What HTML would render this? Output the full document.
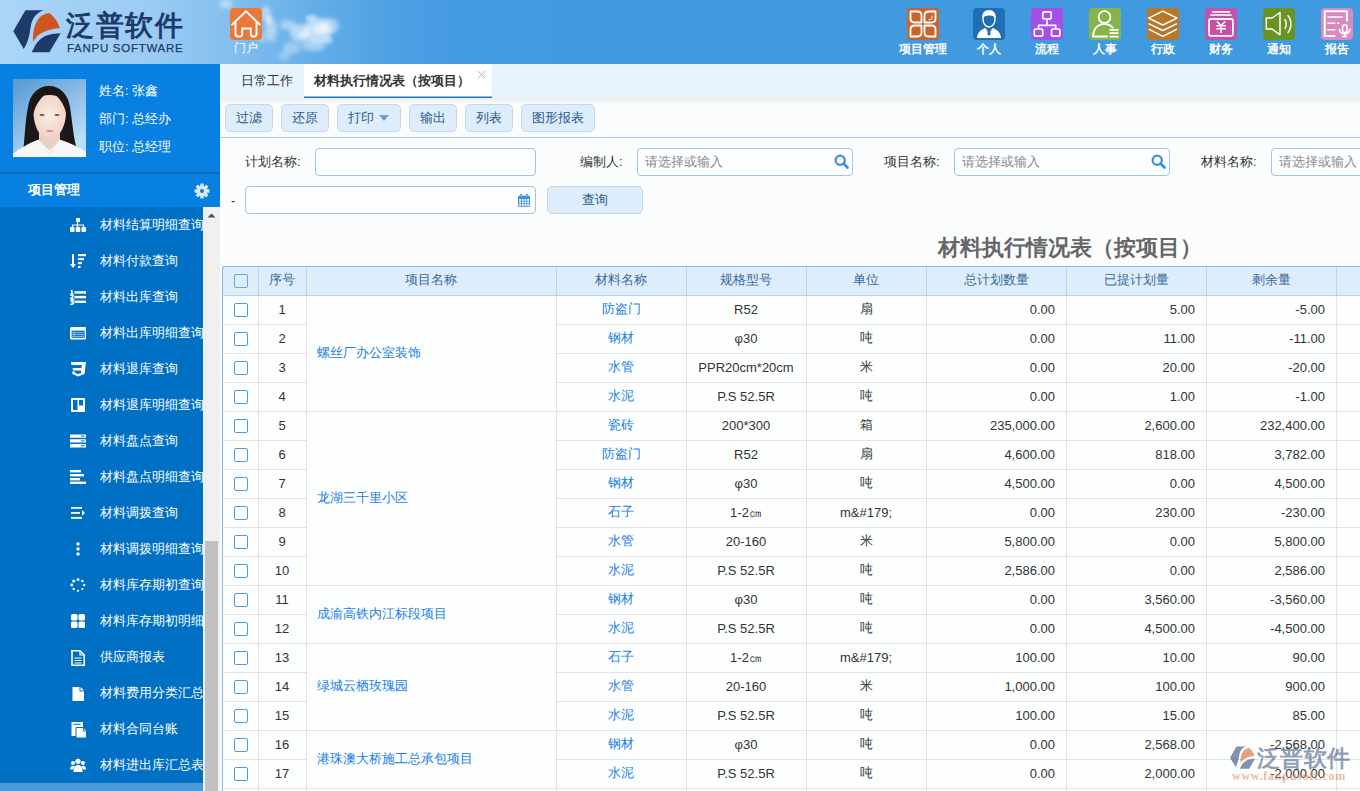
<!DOCTYPE html><html><head><meta charset="utf-8"><style>
*{margin:0;padding:0;box-sizing:border-box}
html,body{width:1360px;height:791px;overflow:hidden;font-family:"Liberation Sans",sans-serif;font-size:13px;color:#333;background:#fbfdfd}
.a{position:absolute}
.t{position:absolute;white-space:nowrap;line-height:1}
#hdr{position:absolute;left:0;top:0;width:1360px;height:64px;background:linear-gradient(to right,#aad5f7 0px,#9bccf4 150px,#80bdee 240px,#62ade8 320px,#4c9fe3 400px,#429ae0 480px,#409ae0 1360px);overflow:hidden}
.ico{position:absolute;top:8px;width:32px;height:32px;border-radius:4px}
.ico svg{position:absolute;left:0;top:0}
.lab{position:absolute;top:43px;font-size:12px;color:#fff;font-weight:bold;white-space:nowrap;line-height:12px;text-align:center;width:60px}
#side{position:absolute;left:0;top:64px;width:220px;height:727px;background:#0780e2;overflow:hidden}
.mi{position:absolute;left:0;width:203px;height:36px;color:#fff;overflow:hidden}
.mi .tx{position:absolute;left:100px;top:11px;font-size:13px;line-height:14px;white-space:nowrap}
.mi svg{position:absolute;left:70px;top:11px}
.btn{position:absolute;top:104px;height:28px;border:1px solid #c2d9ee;background:#deedfb;border-radius:5px;color:#2b5a8a;font-size:13px;line-height:25px;text-align:center}
.inp{position:absolute;height:28px;border:1px solid #9fc4e4;border-radius:4px;background:#fdfefe}
.ph{position:absolute;left:7px;top:6px;color:#8a8a8a;font-size:13px;line-height:14px;white-space:nowrap}
.lbl{position:absolute;font-size:13px;line-height:14px;color:#333;white-space:nowrap;margin-top:1px}
.vl{position:absolute;width:1px;background:#e2e2e2}
.hl{position:absolute;height:1px;background:#e2e2e2}
.cell{position:absolute;font-size:13px;line-height:14px;white-space:nowrap}
.cb{position:absolute;width:14px;height:14px;border:1.5px solid #4a9be0;border-radius:2px;background:#fff}
</style></head><body>
<div id="hdr">
<svg class="a" style="left:200px;top:0" width="180" height="64" viewBox="200 0 180 64">
<defs><filter id="cb" x="-50%" y="-50%" width="200%" height="200%"><feGaussianBlur stdDeviation="2.2"/></filter>
<filter id="cb2" x="-50%" y="-50%" width="200%" height="200%"><feGaussianBlur stdDeviation="1.2"/></filter></defs>
<g filter="url(#cb)" fill="#fff">
<ellipse cx="226" cy="4" rx="7" ry="4" opacity=".45"/>
<ellipse cx="266" cy="14" rx="5" ry="8" opacity=".45"/>
<ellipse cx="271" cy="30" rx="6" ry="12" opacity=".42"/>
<ellipse cx="262" cy="38" rx="4" ry="5" opacity=".3"/>
<ellipse cx="288" cy="25" rx="8" ry="5" opacity=".4"/>
<ellipse cx="300" cy="33" rx="10" ry="9" opacity=".5"/>
<ellipse cx="318" cy="30" rx="14" ry="12" opacity=".6"/>
<ellipse cx="330" cy="26" rx="9" ry="8" opacity=".45"/>
<ellipse cx="314" cy="45" rx="12" ry="6" opacity=".45"/>
<ellipse cx="292" cy="48" rx="9" ry="6" opacity=".35"/>
<ellipse cx="284" cy="56" rx="6" ry="4" opacity=".3"/>
</g>
<g filter="url(#cb2)" fill="#fff">
<ellipse cx="320" cy="29" rx="7" ry="6" opacity=".45"/>
<ellipse cx="303" cy="35" rx="5" ry="4" opacity=".4"/>
<ellipse cx="311" cy="18" rx="6" ry="3.5" opacity=".4"/>
<ellipse cx="328" cy="40" rx="5" ry="4" opacity=".4"/>
<ellipse cx="269" cy="20" rx="3" ry="5" opacity=".35"/>
</g>
</svg>
<svg class="a" style="left:0;top:0" width="70" height="64" viewBox="0 0 70 64"><path d="M13.3 31.3 L25.4 10.3 L43.5 10.3 C37.5 12.5 33 17 31.2 24 C30 30 29.5 40 23.8 49 Z" fill="#1e3a6a"/><path d="M33 41.8 C32.8 32 34 24 39.5 17.5 C43 14.5 46 13.5 49.4 13 C54 16.5 58 22 59.9 28 C52 28.5 45 30.5 40 34 C37 36 35 38.5 33 41.8 Z" fill="#cf5620"/><path d="M31.7 52.3 L49.4 52.3 L60.6 33.3 C53 33.5 45 35 40 39.5 C36 43 34 48 31.7 52.3 Z" fill="#1e3a6a"/></svg>
<div class="t" style="left:66px;top:10px;font-size:28px;line-height:32px;color:#1e3a6a;letter-spacing:1.5px;font-weight:bold">泛普软件</div>
<div class="t" style="left:67px;top:43px;font-size:11.5px;line-height:11px;color:#1e3a6a;letter-spacing:.72px;-webkit-text-stroke:.25px #1e3a6a">FANPU SOFTWARE</div>
<div class="ico" style="left:230px;background:#e8793a"><svg width="32" height="32" viewBox="0 0 32 32">
<path d="M2.2 16.5 L16 3.3 L29.8 16.5" fill="none" stroke="#fff" stroke-width="1.9" stroke-linejoin="miter" stroke-linecap="round"/>
<path d="M5.5 13 V26 Q5.5 28.5 8 28.5 H9.8 Q12.2 28.5 12.2 26 V20.5 H20.8 V26 Q20.8 28.5 23.2 28.5 H24 Q26.5 28.5 26.5 26 V13" fill="none" stroke="#fff" stroke-width="1.9"/>
</svg></div>
<div class="lab" style="left:216px;top:42px;font-weight:normal">门户</div>
<div class="ico" style="left:907px;background:#c8652e"><svg width="32" height="32" viewBox="0 0 32 32"><g fill="none" stroke="#fff" stroke-width="1.8" stroke-linejoin="round"><path d="M3.5 3.5 H10.5 Q14.5 3.5 14.5 7.5 V14.5 H7.5 Q3.5 14.5 3.5 10.5 Z"/><path d="M28.5 3.5 H21.5 Q17.5 3.5 17.5 7.5 V14.5 H24.5 Q28.5 14.5 28.5 10.5 Z"/><path d="M3.5 28.5 H10.5 Q14.5 28.5 14.5 24.5 V17.5 H7.5 Q3.5 17.5 3.5 21.5 Z"/><path d="M28.5 28.5 H21.5 Q17.5 28.5 17.5 24.5 V17.5 H24.5 Q28.5 17.5 28.5 21.5 Z"/></g><path d="M25 7.5 V10 Q25 11.5 23.5 11.5 H21.5" fill="none" stroke="#fff" stroke-width="0.9"/></svg></div>
<div class="lab" style="left:893px">项目管理</div>
<div class="ico" style="left:973px;background:#1f6db3"><svg width="32" height="32" viewBox="0 0 32 32"><path d="M10 11 C10 5.5 12.5 3.5 16 3.5 C19.5 3.5 22 5.5 22 11 C22 15.5 19.5 19 16 19 C12.5 19 10 15.5 10 11 Z" fill="#1f6db3" stroke="#fff" stroke-width="1.4"/><path d="M9.2 10 C9 5 11.5 2 16 2 C20.5 2 23 5 22.8 10 C21 8 18 7.5 16 7.5 C13 7.5 11 8.5 9.2 10 Z" fill="#fff"/><path d="M4 30 C4.5 24.5 7 22 12.5 20 L16 25.5 L19.5 20 C25 22 27.5 24.5 28 30 Z" fill="#fff"/><path d="M15 21 H17 L17.6 26 L16 28 L14.4 26 Z" fill="#1f6db3"/></svg></div>
<div class="lab" style="left:959px">个人</div>
<div class="ico" style="left:1031px;background:#a64ee6"><svg width="32" height="32" viewBox="0 0 32 32"><g fill="none" stroke="#fff" stroke-width="1.7" stroke-linejoin="round"><rect x="11.8" y="3.8" width="8.4" height="7.2" rx="1.3"/><rect x="3.3" y="21" width="8.4" height="7.2" rx="1.3"/><rect x="20.5" y="21" width="8.4" height="7.2" rx="1.3"/><path d="M16 11 V17.3 M7.5 21 V17.3 H24.7 V21"/></g></svg></div>
<div class="lab" style="left:1017px">流程</div>
<div class="ico" style="left:1089px;background:#86b34a"><svg width="32" height="32" viewBox="0 0 32 32"><g fill="none" stroke="#fff" stroke-width="1.8"><circle cx="15.5" cy="9.1" r="5.9"/><path d="M24.2 20.3 C22 17.5 19 16 15.5 16 C8.5 16 4.1 21.5 4.1 28.5 H18.8"/></g><path d="M20.5 21.8 H29.5 M20.5 25.2 H29.5 M20.5 28.6 H29.5" stroke="#fff" stroke-width="1.8"/></svg></div>
<div class="lab" style="left:1075px">人事</div>
<div class="ico" style="left:1147px;background:#b8782a"><svg width="32" height="32" viewBox="0 0 32 32"><g fill="none" stroke="#fff" stroke-width="1.5" stroke-linejoin="round"><path d="M15.8 3.2 L30 10.1 L15.8 17 L1.6 10.1 Z"/><path d="M1.6 15.6 L15.8 22.5 L30 15.6"/><path d="M1.6 21.2 L15.8 28.3 L30 21.2"/></g></svg></div>
<div class="lab" style="left:1133px">行政</div>
<div class="ico" style="left:1205px;background:#c64fa8"><svg width="32" height="32" viewBox="0 0 32 32"><path d="M7 3.9 H25 M5.3 7 H26.7" stroke="#fff" stroke-width="1.7"/><rect x="4.1" y="11" width="23.8" height="16.8" rx="1.5" fill="none" stroke="#fff" stroke-width="1.8"/><path d="M12 13.5 L16 17.7 L20.2 13.5 M11.3 17.7 H20.9 M11.3 20.8 H20.9 M16 17.7 V25" fill="none" stroke="#fff" stroke-width="1.6"/></svg></div>
<div class="lab" style="left:1191px">财务</div>
<div class="ico" style="left:1263px;background:#6a9322"><svg width="32" height="32" viewBox="0 0 32 32"><path d="M3.3 10 H9 L17 4.5 V26.8 L9 21 H3.3 Z" fill="none" stroke="#fff" stroke-width="1.5" stroke-linejoin="round"/><path d="M21.6 11 C23.8 13.5 23.8 18.5 21.6 21" fill="none" stroke="#fff" stroke-width="1.5"/><path d="M24.6 7.2 C29 12 29 20 24.6 25" fill="none" stroke="#fff" stroke-width="1.5"/></svg></div>
<div class="lab" style="left:1249px">通知</div>
<div class="ico" style="left:1321px;background:#d98bbf"><svg width="32" height="32" viewBox="0 0 32 32"><path d="M14.3 28.1 H3.7 V3.3 H25.9 V13.5" fill="none" stroke="#fff" stroke-width="2"/><path d="M6.4 9 H21.9 M6.4 15.3 H14.3 M16 15.3 H18.4 M6.4 21.8 H14.3" stroke="#fff" stroke-width="1.6"/><rect x="21.6" y="16.8" width="4.4" height="7.8" rx="2.2" fill="none" stroke="#fff" stroke-width="1.5"/><path d="M18.4 20.8 C18.4 24.3 20.5 25.8 23.8 25.8 C27 25.8 29 24.3 29 20.8 M23.8 25.8 V28.3 M21.3 28.5 H26.3" fill="none" stroke="#fff" stroke-width="1.5"/></svg></div>
<div class="lab" style="left:1307px">报告</div>
</div>
<div id="side">
<svg class="a" style="left:13px;top:15px" width="73" height="78" viewBox="0 0 73 78">
<defs><linearGradient id="pg" x1="0" y1="0" x2="0.6" y2="1"><stop offset="0" stop-color="#5697d2"/><stop offset="1" stop-color="#bde0f8"/></linearGradient>
<radialGradient id="sk" cx="0.5" cy="0.45" r="0.6"><stop offset="0" stop-color="#fbece4"/><stop offset="1" stop-color="#edcfc0"/></radialGradient></defs>
<rect width="73" height="78" fill="url(#pg)"/>
<path d="M10.5 69 C12 55 12.5 40 15 28 C17 15 25 7 36 7 C47 7 55 15 57 28 C59 40 60 55 63 67 Z" fill="#1b1718"/>
<path d="M26 50 H47 V74 H26 Z" fill="#ead0c2"/>
<path d="M20.5 33 C20.5 22 26 16 36.7 16 C47 16 53 22 53 33 C53 47 46 60.5 36.7 60.5 C27 60.5 20.5 47 20.5 33 Z" fill="url(#sk)"/>
<path d="M19.5 38 C18 22 24 9 36.5 9 C49 9 55 22 54 38 C52 26 46 17 37 12 C28 17 22 26 19.5 38 Z" fill="#1b1718"/>
<path d="M0 78 V75 C6 70 16 64 25.5 60.5 C29 65 33 69 36.7 71 C40.5 69 44 65 46.7 60.5 C56 63.5 66 68 73 73 V78 Z" fill="#f7f7f9"/>
<path d="M32 71 L36.7 75 L41 71" fill="none" stroke="#dcdde2" stroke-width=".8"/>
<ellipse cx="29" cy="36" rx="2.6" ry="1.1" fill="#6a5550"/>
<ellipse cx="44" cy="36" rx="2.6" ry="1.1" fill="#6a5550"/>
<ellipse cx="36.7" cy="52" rx="3.6" ry="1.1" fill="#e28a92"/>
</svg>
<div class="t" style="left:99px;top:20px;font-size:13px;line-height:14px;color:#fff">姓名: 张鑫</div>
<div class="t" style="left:99px;top:48px;font-size:13px;line-height:14px;color:#fff">部门: 总经办</div>
<div class="t" style="left:99px;top:76px;font-size:13px;line-height:14px;color:#fff">职位: 总经理</div>
<div class="a" style="left:0;top:108px;width:220px;height:2px;background:#0a6bbd"></div>
<div class="t" style="left:28px;top:119px;font-size:13px;line-height:14px;color:#fff;font-weight:bold">项目管理</div>
<svg class="a" style="left:194px;top:118.5px" width="16" height="16" viewBox="0 0 16 16"><g fill="#d6e7f7">
<circle cx="8" cy="8" r="5.6"/>
<rect x="6.3" y="0.5" width="3.4" height="15" rx="0.6"/>
<rect x="6.3" y="0.5" width="3.4" height="15" rx="0.6" transform="rotate(45 8 8)"/>
<rect x="6.3" y="0.5" width="3.4" height="15" rx="0.6" transform="rotate(90 8 8)"/>
<rect x="6.3" y="0.5" width="3.4" height="15" rx="0.6" transform="rotate(135 8 8)"/>
</g><circle cx="8" cy="8" r="2" fill="#0780e2"/></svg>
<div class="a" style="left:0;top:143px;width:220px;height:584px;background:#0070c4">
<div class="mi" style="top:0px"><svg width="16" height="16" viewBox="0 0 16 16" fill="#fff"><rect x="6" y="0" width="4" height="4" rx=".5"/><path d="M7.5 4 V7 H2.5 V9 M7.5 7 H13.5 V9 M7.5 7 V9" stroke="#fff" stroke-width="1.2" fill="none"/><rect x="0" y="9" width="4.5" height="5" rx=".7"/><rect x="5.75" y="9" width="4.5" height="5" rx=".7"/><rect x="11.5" y="9" width="4.5" height="5" rx=".7"/></svg><div class="tx">材料结算明细查询</div></div>
<div class="mi" style="top:36px"><svg width="16" height="16" viewBox="0 0 16 16" fill="#fff"><path d="M3 0 V11" stroke="#fff" stroke-width="2"/><path d="M0 10 L3 14 L6 10 Z"/><rect x="8" y="0" width="8" height="2.2"/><rect x="8" y="4" width="6" height="2.2"/><rect x="8" y="8" width="4" height="2.2"/><rect x="8" y="12" width="2.5" height="2"/></svg><div class="tx">材料付款查询</div></div>
<div class="mi" style="top:72px"><svg width="16" height="16" viewBox="0 0 16 16" fill="#fff"><rect x="4.5" y="1.2" width="12" height="2.4"/><rect x="4.5" y="5.9" width="12" height="2.4"/><rect x="4.5" y="10.6" width="12" height="2.4"/><g fill="none" stroke="#fff" stroke-width="1.5"><path d="M0.6 0.6 L1.9 -0.2 V3.9 M0.4 3.9 H3.4"/><path d="M0.4 5.6 Q1.8 4.4 3 5.3 Q3.6 6.5 0.6 8.8 H3.6"/><path d="M0.4 10 H3.2 L1.6 11.6 Q3.6 11.8 3.4 13.2 Q2.6 14.8 0.3 14.1"/></g></svg><div class="tx">材料出库查询</div></div>
<div class="mi" style="top:108px"><svg width="16" height="16" viewBox="0 0 16 16" fill="#fff"><rect x="0" y="1" width="16.3" height="12.5" rx="1.5"/><rect x="1.6" y="4.6" width="13.1" height="7.3" fill="#0070c4"/><path d="M2.2 6.6 H14.1 M2.2 8.6 H14.1 M2.2 10.6 H14.1" stroke="#8fbde6" stroke-width="1"/><path d="M4 5 V11.5" stroke="#8fbde6" stroke-width="0.8"/></svg><div class="tx">材料出库明细查询</div></div>
<div class="mi" style="top:144px"><svg width="16" height="16" viewBox="0 0 16 16" fill="#fff"><path d="M1 0 H16 L14.5 12 L8 14.5 L2.5 12 L2.2 9.5 H5 L5.2 11 L8 12 L11 11 L11.3 8.5 H3 L2.7 6 H11.5 L11.8 3 H1.3 Z"/></svg><div class="tx">材料退库查询</div></div>
<div class="mi" style="top:180px"><svg width="16" height="16" viewBox="0 0 16 16" fill="#fff"><rect x="1" y="0" width="14" height="14" rx="1"/><rect x="3" y="2" width="4.5" height="10" fill="#0070c4"/><rect x="9" y="2" width="4" height="5.5" fill="#0070c4"/></svg><div class="tx">材料退库明细查询</div></div>
<div class="mi" style="top:216px"><svg width="16" height="16" viewBox="0 0 16 16" fill="#fff"><rect x="0" y="0.5" width="16" height="3.3" rx=".5"/><rect x="0" y="5.3" width="16" height="3.3" rx=".5"/><rect x="0" y="10.1" width="16" height="3.3" rx=".5"/><rect x="11" y="1.6" width="3.5" height="1" fill="#0070c4"/><rect x="11" y="6.4" width="3.5" height="1" fill="#0070c4"/><rect x="11" y="11.2" width="3.5" height="1" fill="#0070c4"/></svg><div class="tx">材料盘点查询</div></div>
<div class="mi" style="top:252px"><svg width="16" height="16" viewBox="0 0 16 16" fill="#fff"><rect x="0" y="0" width="11" height="2.4"/><rect x="0" y="4" width="14" height="2.4"/><rect x="0" y="8" width="10" height="2.4"/><rect x="0" y="11.6" width="16" height="2.4"/></svg><div class="tx">材料盘点明细查询</div></div>
<div class="mi" style="top:288px"><svg width="16" height="16" viewBox="0 0 16 16" fill="#fff"><rect x="1" y="1" width="11" height="1.8"/><rect x="1" y="6" width="9" height="1.8"/><rect x="1" y="11" width="11" height="1.8"/><path d="M12 4 L15 6.9 L12 9.8 Z"/></svg><div class="tx">材料调拨查询</div></div>
<div class="mi" style="top:324px"><svg width="16" height="16" viewBox="0 0 16 16" fill="#fff"><circle cx="8" cy="2" r="1.7"/><circle cx="8" cy="7" r="1.7"/><circle cx="8" cy="12" r="1.7"/></svg><div class="tx">材料调拨明细查询</div></div>
<div class="mi" style="top:360px"><svg width="16" height="16" viewBox="0 0 16 16" fill="#fff"><circle cx="8" cy="1.5" r="1.5"/><circle cx="12.3" cy="3" r="1.3"/><circle cx="14.2" cy="7" r="1.2"/><circle cx="12.3" cy="11" r="1.1"/><circle cx="8" cy="12.8" r="1.1"/><circle cx="3.7" cy="11" r="1.2"/><circle cx="1.8" cy="7" r="1.4"/><circle cx="3.7" cy="3" r="1.5"/></svg><div class="tx">材料库存期初查询</div></div>
<div class="mi" style="top:396px"><svg width="16" height="16" viewBox="0 0 16 16" fill="#fff"><rect x="1" y="0" width="6.5" height="6.5" rx="1.5"/><rect x="8.5" y="0" width="6.5" height="6.5" rx="1.5"/><rect x="1" y="7.5" width="6.5" height="6.5" rx="1.5"/><rect x="8.5" y="7.5" width="6.5" height="6.5" rx="1.5"/></svg><div class="tx">材料库存期初明细查询</div></div>
<div class="mi" style="top:432px"><svg width="16" height="16" viewBox="0 0 16 16" fill="#fff"><path d="M2 0.8 H10 L14.2 5 V15.2 H2 Z" fill="none" stroke="#fff" stroke-width="1.6"/><path d="M10 0.8 V5 H14.2" fill="none" stroke="#fff" stroke-width="1.2"/><path d="M4.5 8 H11.5 M4.5 10.5 H11.5 M4.5 13 H11.5" stroke="#fff" stroke-width="1.2"/></svg><div class="tx">供应商报表</div></div>
<div class="mi" style="top:468px"><svg width="16" height="16" viewBox="0 0 16 16" fill="#fff"><path d="M2.5 1 H9.5 V5.5 H14 V15 H2.5 Z"/><path d="M10.5 1 L14 4.5 H10.5 Z"/></svg><div class="tx">材料费用分类汇总表</div></div>
<div class="mi" style="top:504px"><svg width="16" height="16" viewBox="0 0 16 16" fill="#fff"><path d="M1.5 0 H13 V14 H1.5 Z"/><rect x="3.5" y="1.8" width="7" height="1" fill="#0070c4"/><path d="M6 5.5 H13.5 L17 9 V16 H6 Z" fill="#fff" stroke="#0070c4" stroke-width="1"/><path d="M13.5 5.5 V9 H17" fill="none" stroke="#0070c4" stroke-width="0.9"/></svg><div class="tx">材料合同台账</div></div>
<div class="mi" style="top:540px"><svg width="16" height="16" viewBox="0 0 16 16" fill="#fff"><circle cx="8" cy="3.3" r="2.6"/><path d="M3.5 14 C3.5 9 5 7 8 7 C11 7 12.5 9 12.5 14 Z"/><circle cx="3" cy="5" r="2"/><circle cx="13" cy="5" r="2"/><path d="M0 11.5 C0 9 1 7.8 3 7.8 C3.8 7.8 4.3 8 4.6 8.3 C3.8 9.2 3.3 10.3 3.3 11.5 Z"/><path d="M16 11.5 C16 9 15 7.8 13 7.8 C12.2 7.8 11.7 8 11.4 8.3 C12.2 9.2 12.7 10.3 12.7 11.5 Z"/></svg><div class="tx">材料进出库汇总表</div></div>
<div class="a" style="left:0;top:576px;width:203px;height:8px;background:#4b9ad8"></div>
<div class="a" style="left:203px;top:0;width:17px;height:584px;background:#f0f0f0"></div>
<svg class="a" style="left:206px;top:5px" width="11" height="7" viewBox="0 0 11 7"><path d="M1.5 5.5 L5.5 1.5 L9.5 5.5 Z" fill="#505050"/></svg>
<div class="a" style="left:205px;top:334px;width:13px;height:260px;background:#c1c1c1"></div>
</div>
</div>
<div class="a" style="left:220px;top:64px;width:1140px;height:34px;background:#e7f4fe"></div>
<div class="a" style="left:220px;top:98px;width:1140px;height:6px;background:linear-gradient(#ececec,rgba(251,253,253,0))"></div>
<div class="t" style="left:241px;top:74px;font-size:13px;line-height:14px;color:#333">日常工作</div>
<div class="a" style="left:304px;top:64px;width:188px;height:34px;background:#fff;border-bottom:1px solid #1f72c4;box-shadow:inset 0 -1px 0 #8dbbe6"></div>
<div class="t" style="left:314px;top:74px;font-size:13px;line-height:14px;color:#333;font-weight:bold">材料执行情况表（按项目）</div>
<svg class="a" style="left:477px;top:70px" width="9" height="9" viewBox="0 0 9 9"><path d="M1 1 L8 8 M8 1 L1 8" stroke="#b0b0b0" stroke-width="1"/></svg>
<div class="btn" style="left:225px;width:48px">过滤</div>
<div class="btn" style="left:281px;width:48px">还原</div>
<div class="btn" style="left:337px;width:64px;text-align:left;padding-left:10px">打印<svg style="position:absolute;left:41px;top:10px" width="10" height="6" viewBox="0 0 10 6"><path d="M0 0 H10 L5 6 Z" fill="#6a9fd4"/></svg></div>
<div class="btn" style="left:409px;width:48px">输出</div>
<div class="btn" style="left:465px;width:48px">列表</div>
<div class="btn" style="left:521px;width:74px">图形报表</div>
<div class="a" style="left:220px;top:137px;width:1140px;height:1px;background:#a6cbe8"></div>
<div class="lbl" style="left:245px;top:154px">计划名称:</div>
<div class="inp" style="left:315px;top:148px;width:221px"></div>
<div class="lbl" style="left:580px;top:154px">编制人:</div>
<div class="inp" style="left:637px;top:148px;width:216px"><div class="ph">请选择或输入</div></div>
<div class="lbl" style="left:884px;top:154px">项目名称:</div>
<div class="inp" style="left:954px;top:148px;width:216px"><div class="ph">请选择或输入</div></div>
<div class="lbl" style="left:1201px;top:154px">材料名称:</div>
<div class="inp" style="left:1271px;top:148px;width:120px"><div class="ph">请选择或输入</div></div>
<svg class="a" style="left:834px;top:154px" width="15" height="15" viewBox="0 0 15 15"><circle cx="6.2" cy="6.2" r="4.6" fill="none" stroke="#3a8fdc" stroke-width="2.2"/><path d="M9.5 9.5 L13.5 13.5" stroke="#3a8fdc" stroke-width="2.6" stroke-linecap="round"/></svg>
<svg class="a" style="left:1151px;top:154px" width="15" height="15" viewBox="0 0 15 15"><circle cx="6.2" cy="6.2" r="4.6" fill="none" stroke="#3a8fdc" stroke-width="2.2"/><path d="M9.5 9.5 L13.5 13.5" stroke="#3a8fdc" stroke-width="2.6" stroke-linecap="round"/></svg>
<div class="t" style="left:231px;top:194px;font-size:13px;color:#333">-</div>
<div class="inp" style="left:245px;top:186px;width:291px"></div>
<svg class="a" style="left:518px;top:194px" width="12" height="13" viewBox="0 0 12 13"><rect x="0" y="1.8" width="12" height="11" rx="1" fill="#3f90dc"/><rect x="1.1" y="5.1" width="1.9" height="1.7" fill="#fff"/><rect x="1.1" y="7.6" width="1.9" height="1.7" fill="#fff"/><rect x="1.1" y="10.1" width="1.9" height="1.7" fill="#fff"/><rect x="3.9" y="5.1" width="1.9" height="1.7" fill="#fff"/><rect x="3.9" y="7.6" width="1.9" height="1.7" fill="#fff"/><rect x="3.9" y="10.1" width="1.9" height="1.7" fill="#fff"/><rect x="6.6" y="5.1" width="1.9" height="1.7" fill="#fff"/><rect x="6.6" y="7.6" width="1.9" height="1.7" fill="#fff"/><rect x="6.6" y="10.1" width="1.9" height="1.7" fill="#fff"/><rect x="9.2" y="5.1" width="1.9" height="1.7" fill="#fff"/><rect x="9.2" y="7.6" width="1.9" height="1.7" fill="#fff"/><rect x="9.2" y="10.1" width="1.9" height="1.7" fill="#fff"/><rect x="2" y="0" width="2.2" height="3.2" rx=".8" fill="#3f90dc"/><rect x="7.6" y="0" width="2.2" height="3.2" rx=".8" fill="#3f90dc"/><rect x="2.7" y="1" width="0.8" height="1.6" fill="#cfe3f6"/><rect x="8.3" y="1" width="0.8" height="1.6" fill="#cfe3f6"/></svg>
<div class="btn" style="left:547px;top:186px;width:96px">查询</div>
<div class="t" style="left:938px;top:235px;font-size:22px;line-height:26px;color:#666;font-weight:bold">材料执行情况表（按项目）</div>
<div class="a" style="left:222px;top:266px;width:1138px;height:30px;background:#deedfb;border-top:1px solid #80b6e2;border-bottom:1px solid #b3d2ee;border-left:1px solid #80b6e2;border-top-left-radius:3px"></div>
<div class="a" style="left:222px;top:296px;width:1138px;height:500px;background:#fdfefe;border-left:1px solid #80b6e2"></div>
<div class="a" style="left:258px;top:267px;width:1px;height:28px;background:#b8d5ee"></div>
<div class="a" style="left:306px;top:267px;width:1px;height:28px;background:#b8d5ee"></div>
<div class="a" style="left:556px;top:267px;width:1px;height:28px;background:#b8d5ee"></div>
<div class="a" style="left:686px;top:267px;width:1px;height:28px;background:#b8d5ee"></div>
<div class="a" style="left:806px;top:267px;width:1px;height:28px;background:#b8d5ee"></div>
<div class="a" style="left:926px;top:267px;width:1px;height:28px;background:#b8d5ee"></div>
<div class="a" style="left:1066px;top:267px;width:1px;height:28px;background:#b8d5ee"></div>
<div class="a" style="left:1206px;top:267px;width:1px;height:28px;background:#b8d5ee"></div>
<div class="a" style="left:1336px;top:267px;width:1px;height:28px;background:#b8d5ee"></div>
<div class="cell" style="left:258px;width:48px;top:273px;text-align:center;color:#3b6a98">序号</div>
<div class="cell" style="left:306px;width:250px;top:273px;text-align:center;color:#3b6a98">项目名称</div>
<div class="cell" style="left:556px;width:130px;top:273px;text-align:center;color:#3b6a98">材料名称</div>
<div class="cell" style="left:686px;width:120px;top:273px;text-align:center;color:#3b6a98">规格型号</div>
<div class="cell" style="left:806px;width:120px;top:273px;text-align:center;color:#3b6a98">单位</div>
<div class="cell" style="left:926px;width:140px;top:273px;text-align:center;color:#3b6a98">总计划数量</div>
<div class="cell" style="left:1066px;width:140px;top:273px;text-align:center;color:#3b6a98">已提计划量</div>
<div class="cell" style="left:1206px;width:130px;top:273px;text-align:center;color:#3b6a98">剩余量</div>
<div class="cb" style="left:234px;top:274px;border:1px solid #6fa6d8;background:transparent"></div>
<div class="vl" style="left:258px;top:296px;height:500px"></div>
<div class="vl" style="left:306px;top:296px;height:500px"></div>
<div class="vl" style="left:556px;top:296px;height:500px"></div>
<div class="vl" style="left:686px;top:296px;height:500px"></div>
<div class="vl" style="left:806px;top:296px;height:500px"></div>
<div class="vl" style="left:926px;top:296px;height:500px"></div>
<div class="vl" style="left:1066px;top:296px;height:500px"></div>
<div class="vl" style="left:1206px;top:296px;height:500px"></div>
<div class="vl" style="left:1336px;top:296px;height:500px"></div>
<div class="hl" style="left:223px;top:324px;width:83px"></div>
<div class="hl" style="left:556px;top:324px;width:804px"></div>
<div class="hl" style="left:223px;top:353px;width:83px"></div>
<div class="hl" style="left:556px;top:353px;width:804px"></div>
<div class="hl" style="left:223px;top:382px;width:83px"></div>
<div class="hl" style="left:556px;top:382px;width:804px"></div>
<div class="hl" style="left:223px;top:411px;width:1137px"></div>
<div class="cell" style="left:317px;top:346px;color:#1a80e6">螺丝厂办公室装饰</div>
<div class="cb" style="left:234px;top:303px"></div>
<div class="cell" style="left:258px;width:48px;top:303px;text-align:center">1</div>
<div class="cell" style="left:556px;width:130px;top:302px;text-align:center;color:#1a80e6">防盗门</div>
<div class="cell" style="left:686px;width:120px;top:303px;text-align:center">R52</div>
<div class="cell" style="left:806px;width:120px;top:302px;text-align:center">扇</div>
<div class="cell" style="left:926px;width:129px;top:303px;text-align:right">0.00</div>
<div class="cell" style="left:1066px;width:129px;top:303px;text-align:right">5.00</div>
<div class="cell" style="left:1206px;width:119px;top:303px;text-align:right">-5.00</div>
<div class="cb" style="left:234px;top:332px"></div>
<div class="cell" style="left:258px;width:48px;top:332px;text-align:center">2</div>
<div class="cell" style="left:556px;width:130px;top:331px;text-align:center;color:#1a80e6">钢材</div>
<div class="cell" style="left:686px;width:120px;top:332px;text-align:center">φ30</div>
<div class="cell" style="left:806px;width:120px;top:331px;text-align:center">吨</div>
<div class="cell" style="left:926px;width:129px;top:332px;text-align:right">0.00</div>
<div class="cell" style="left:1066px;width:129px;top:332px;text-align:right">11.00</div>
<div class="cell" style="left:1206px;width:119px;top:332px;text-align:right">-11.00</div>
<div class="cb" style="left:234px;top:361px"></div>
<div class="cell" style="left:258px;width:48px;top:361px;text-align:center">3</div>
<div class="cell" style="left:556px;width:130px;top:360px;text-align:center;color:#1a80e6">水管</div>
<div class="cell" style="left:686px;width:120px;top:361px;text-align:center">PPR20cm*20cm</div>
<div class="cell" style="left:806px;width:120px;top:360px;text-align:center">米</div>
<div class="cell" style="left:926px;width:129px;top:361px;text-align:right">0.00</div>
<div class="cell" style="left:1066px;width:129px;top:361px;text-align:right">20.00</div>
<div class="cell" style="left:1206px;width:119px;top:361px;text-align:right">-20.00</div>
<div class="cb" style="left:234px;top:390px"></div>
<div class="cell" style="left:258px;width:48px;top:390px;text-align:center">4</div>
<div class="cell" style="left:556px;width:130px;top:389px;text-align:center;color:#1a80e6">水泥</div>
<div class="cell" style="left:686px;width:120px;top:390px;text-align:center">P.S 52.5R</div>
<div class="cell" style="left:806px;width:120px;top:389px;text-align:center">吨</div>
<div class="cell" style="left:926px;width:129px;top:390px;text-align:right">0.00</div>
<div class="cell" style="left:1066px;width:129px;top:390px;text-align:right">1.00</div>
<div class="cell" style="left:1206px;width:119px;top:390px;text-align:right">-1.00</div>
<div class="hl" style="left:223px;top:440px;width:83px"></div>
<div class="hl" style="left:556px;top:440px;width:804px"></div>
<div class="hl" style="left:223px;top:469px;width:83px"></div>
<div class="hl" style="left:556px;top:469px;width:804px"></div>
<div class="hl" style="left:223px;top:498px;width:83px"></div>
<div class="hl" style="left:556px;top:498px;width:804px"></div>
<div class="hl" style="left:223px;top:527px;width:83px"></div>
<div class="hl" style="left:556px;top:527px;width:804px"></div>
<div class="hl" style="left:223px;top:556px;width:83px"></div>
<div class="hl" style="left:556px;top:556px;width:804px"></div>
<div class="hl" style="left:223px;top:585px;width:1137px"></div>
<div class="cell" style="left:317px;top:491px;color:#1a80e6">龙湖三千里小区</div>
<div class="cb" style="left:234px;top:419px"></div>
<div class="cell" style="left:258px;width:48px;top:419px;text-align:center">5</div>
<div class="cell" style="left:556px;width:130px;top:418px;text-align:center;color:#1a80e6">瓷砖</div>
<div class="cell" style="left:686px;width:120px;top:419px;text-align:center">200*300</div>
<div class="cell" style="left:806px;width:120px;top:418px;text-align:center">箱</div>
<div class="cell" style="left:926px;width:129px;top:419px;text-align:right">235,000.00</div>
<div class="cell" style="left:1066px;width:129px;top:419px;text-align:right">2,600.00</div>
<div class="cell" style="left:1206px;width:119px;top:419px;text-align:right">232,400.00</div>
<div class="cb" style="left:234px;top:448px"></div>
<div class="cell" style="left:258px;width:48px;top:448px;text-align:center">6</div>
<div class="cell" style="left:556px;width:130px;top:447px;text-align:center;color:#1a80e6">防盗门</div>
<div class="cell" style="left:686px;width:120px;top:448px;text-align:center">R52</div>
<div class="cell" style="left:806px;width:120px;top:447px;text-align:center">扇</div>
<div class="cell" style="left:926px;width:129px;top:448px;text-align:right">4,600.00</div>
<div class="cell" style="left:1066px;width:129px;top:448px;text-align:right">818.00</div>
<div class="cell" style="left:1206px;width:119px;top:448px;text-align:right">3,782.00</div>
<div class="cb" style="left:234px;top:477px"></div>
<div class="cell" style="left:258px;width:48px;top:477px;text-align:center">7</div>
<div class="cell" style="left:556px;width:130px;top:476px;text-align:center;color:#1a80e6">钢材</div>
<div class="cell" style="left:686px;width:120px;top:477px;text-align:center">φ30</div>
<div class="cell" style="left:806px;width:120px;top:476px;text-align:center">吨</div>
<div class="cell" style="left:926px;width:129px;top:477px;text-align:right">4,500.00</div>
<div class="cell" style="left:1066px;width:129px;top:477px;text-align:right">0.00</div>
<div class="cell" style="left:1206px;width:119px;top:477px;text-align:right">4,500.00</div>
<div class="cb" style="left:234px;top:506px"></div>
<div class="cell" style="left:258px;width:48px;top:506px;text-align:center">8</div>
<div class="cell" style="left:556px;width:130px;top:505px;text-align:center;color:#1a80e6">石子</div>
<div class="cell" style="left:686px;width:120px;top:506px;text-align:center">1-2㎝</div>
<div class="cell" style="left:806px;width:120px;top:506px;text-align:center">m&amp;#179;</div>
<div class="cell" style="left:926px;width:129px;top:506px;text-align:right">0.00</div>
<div class="cell" style="left:1066px;width:129px;top:506px;text-align:right">230.00</div>
<div class="cell" style="left:1206px;width:119px;top:506px;text-align:right">-230.00</div>
<div class="cb" style="left:234px;top:535px"></div>
<div class="cell" style="left:258px;width:48px;top:535px;text-align:center">9</div>
<div class="cell" style="left:556px;width:130px;top:534px;text-align:center;color:#1a80e6">水管</div>
<div class="cell" style="left:686px;width:120px;top:535px;text-align:center">20-160</div>
<div class="cell" style="left:806px;width:120px;top:534px;text-align:center">米</div>
<div class="cell" style="left:926px;width:129px;top:535px;text-align:right">5,800.00</div>
<div class="cell" style="left:1066px;width:129px;top:535px;text-align:right">0.00</div>
<div class="cell" style="left:1206px;width:119px;top:535px;text-align:right">5,800.00</div>
<div class="cb" style="left:234px;top:564px"></div>
<div class="cell" style="left:258px;width:48px;top:564px;text-align:center">10</div>
<div class="cell" style="left:556px;width:130px;top:563px;text-align:center;color:#1a80e6">水泥</div>
<div class="cell" style="left:686px;width:120px;top:564px;text-align:center">P.S 52.5R</div>
<div class="cell" style="left:806px;width:120px;top:563px;text-align:center">吨</div>
<div class="cell" style="left:926px;width:129px;top:564px;text-align:right">2,586.00</div>
<div class="cell" style="left:1066px;width:129px;top:564px;text-align:right">0.00</div>
<div class="cell" style="left:1206px;width:119px;top:564px;text-align:right">2,586.00</div>
<div class="hl" style="left:223px;top:614px;width:83px"></div>
<div class="hl" style="left:556px;top:614px;width:804px"></div>
<div class="hl" style="left:223px;top:643px;width:1137px"></div>
<div class="cell" style="left:317px;top:607px;color:#1a80e6">成渝高铁内江标段项目</div>
<div class="cb" style="left:234px;top:593px"></div>
<div class="cell" style="left:258px;width:48px;top:593px;text-align:center">11</div>
<div class="cell" style="left:556px;width:130px;top:592px;text-align:center;color:#1a80e6">钢材</div>
<div class="cell" style="left:686px;width:120px;top:593px;text-align:center">φ30</div>
<div class="cell" style="left:806px;width:120px;top:592px;text-align:center">吨</div>
<div class="cell" style="left:926px;width:129px;top:593px;text-align:right">0.00</div>
<div class="cell" style="left:1066px;width:129px;top:593px;text-align:right">3,560.00</div>
<div class="cell" style="left:1206px;width:119px;top:593px;text-align:right">-3,560.00</div>
<div class="cb" style="left:234px;top:622px"></div>
<div class="cell" style="left:258px;width:48px;top:622px;text-align:center">12</div>
<div class="cell" style="left:556px;width:130px;top:621px;text-align:center;color:#1a80e6">水泥</div>
<div class="cell" style="left:686px;width:120px;top:622px;text-align:center">P.S 52.5R</div>
<div class="cell" style="left:806px;width:120px;top:621px;text-align:center">吨</div>
<div class="cell" style="left:926px;width:129px;top:622px;text-align:right">0.00</div>
<div class="cell" style="left:1066px;width:129px;top:622px;text-align:right">4,500.00</div>
<div class="cell" style="left:1206px;width:119px;top:622px;text-align:right">-4,500.00</div>
<div class="hl" style="left:223px;top:672px;width:83px"></div>
<div class="hl" style="left:556px;top:672px;width:804px"></div>
<div class="hl" style="left:223px;top:701px;width:83px"></div>
<div class="hl" style="left:556px;top:701px;width:804px"></div>
<div class="hl" style="left:223px;top:730px;width:1137px"></div>
<div class="cell" style="left:317px;top:679px;color:#1a80e6">绿城云栖玫瑰园</div>
<div class="cb" style="left:234px;top:651px"></div>
<div class="cell" style="left:258px;width:48px;top:651px;text-align:center">13</div>
<div class="cell" style="left:556px;width:130px;top:650px;text-align:center;color:#1a80e6">石子</div>
<div class="cell" style="left:686px;width:120px;top:651px;text-align:center">1-2㎝</div>
<div class="cell" style="left:806px;width:120px;top:651px;text-align:center">m&amp;#179;</div>
<div class="cell" style="left:926px;width:129px;top:651px;text-align:right">100.00</div>
<div class="cell" style="left:1066px;width:129px;top:651px;text-align:right">10.00</div>
<div class="cell" style="left:1206px;width:119px;top:651px;text-align:right">90.00</div>
<div class="cb" style="left:234px;top:680px"></div>
<div class="cell" style="left:258px;width:48px;top:680px;text-align:center">14</div>
<div class="cell" style="left:556px;width:130px;top:679px;text-align:center;color:#1a80e6">水管</div>
<div class="cell" style="left:686px;width:120px;top:680px;text-align:center">20-160</div>
<div class="cell" style="left:806px;width:120px;top:679px;text-align:center">米</div>
<div class="cell" style="left:926px;width:129px;top:680px;text-align:right">1,000.00</div>
<div class="cell" style="left:1066px;width:129px;top:680px;text-align:right">100.00</div>
<div class="cell" style="left:1206px;width:119px;top:680px;text-align:right">900.00</div>
<div class="cb" style="left:234px;top:709px"></div>
<div class="cell" style="left:258px;width:48px;top:709px;text-align:center">15</div>
<div class="cell" style="left:556px;width:130px;top:708px;text-align:center;color:#1a80e6">水泥</div>
<div class="cell" style="left:686px;width:120px;top:709px;text-align:center">P.S 52.5R</div>
<div class="cell" style="left:806px;width:120px;top:708px;text-align:center">吨</div>
<div class="cell" style="left:926px;width:129px;top:709px;text-align:right">100.00</div>
<div class="cell" style="left:1066px;width:129px;top:709px;text-align:right">15.00</div>
<div class="cell" style="left:1206px;width:119px;top:709px;text-align:right">85.00</div>
<div class="hl" style="left:223px;top:759px;width:83px"></div>
<div class="hl" style="left:556px;top:759px;width:804px"></div>
<div class="hl" style="left:223px;top:788px;width:1137px"></div>
<div class="cell" style="left:317px;top:752px;color:#1a80e6">港珠澳大桥施工总承包项目</div>
<div class="cb" style="left:234px;top:738px"></div>
<div class="cell" style="left:258px;width:48px;top:738px;text-align:center">16</div>
<div class="cell" style="left:556px;width:130px;top:737px;text-align:center;color:#1a80e6">钢材</div>
<div class="cell" style="left:686px;width:120px;top:738px;text-align:center">φ30</div>
<div class="cell" style="left:806px;width:120px;top:737px;text-align:center">吨</div>
<div class="cell" style="left:926px;width:129px;top:738px;text-align:right">0.00</div>
<div class="cell" style="left:1066px;width:129px;top:738px;text-align:right">2,568.00</div>
<div class="cell" style="left:1206px;width:119px;top:738px;text-align:right">-2,568.00</div>
<div class="cb" style="left:234px;top:767px"></div>
<div class="cell" style="left:258px;width:48px;top:767px;text-align:center">17</div>
<div class="cell" style="left:556px;width:130px;top:766px;text-align:center;color:#1a80e6">水泥</div>
<div class="cell" style="left:686px;width:120px;top:767px;text-align:center">P.S 52.5R</div>
<div class="cell" style="left:806px;width:120px;top:766px;text-align:center">吨</div>
<div class="cell" style="left:926px;width:129px;top:767px;text-align:right">0.00</div>
<div class="cell" style="left:1066px;width:129px;top:767px;text-align:right">2,000.00</div>
<div class="cell" style="left:1206px;width:119px;top:767px;text-align:right">-2,000.00</div>
<svg class="a" style="left:1223px;top:741px" width="37" height="34" viewBox="0 0 70 64" opacity=".55"><path d="M13.3 31.3 L25.4 10.3 L43.5 10.3 C37.5 12.5 33 17 31.2 24 C30 30 29.5 40 23.8 49 Z" fill="#1e3a6a"/><path d="M33 41.8 C32.8 32 34 24 39.5 17.5 C43 14.5 46 13.5 49.4 13 C54 16.5 58 22 59.9 28 C52 28.5 45 30.5 40 34 C37 36 35 38.5 33 41.8 Z" fill="#cf5620"/><path d="M31.7 52.3 L49.4 52.3 L60.6 33.3 C53 33.5 45 35 40 39.5 C36 43 34 48 31.7 52.3 Z" fill="#1e3a6a"/></svg>
<div class="t" style="left:1257px;top:744px;font-size:23px;line-height:28px;color:rgba(50,75,120,.55);letter-spacing:0.3px;font-weight:bold">泛普软件</div>
<div class="t" style="left:1232px;top:771px;font-family:'Liberation Serif',serif;font-size:12px;line-height:10px;font-weight:bold;color:rgba(220,140,100,.6);letter-spacing:.75px">www.fanpusoft.com</div>
</body></html>
